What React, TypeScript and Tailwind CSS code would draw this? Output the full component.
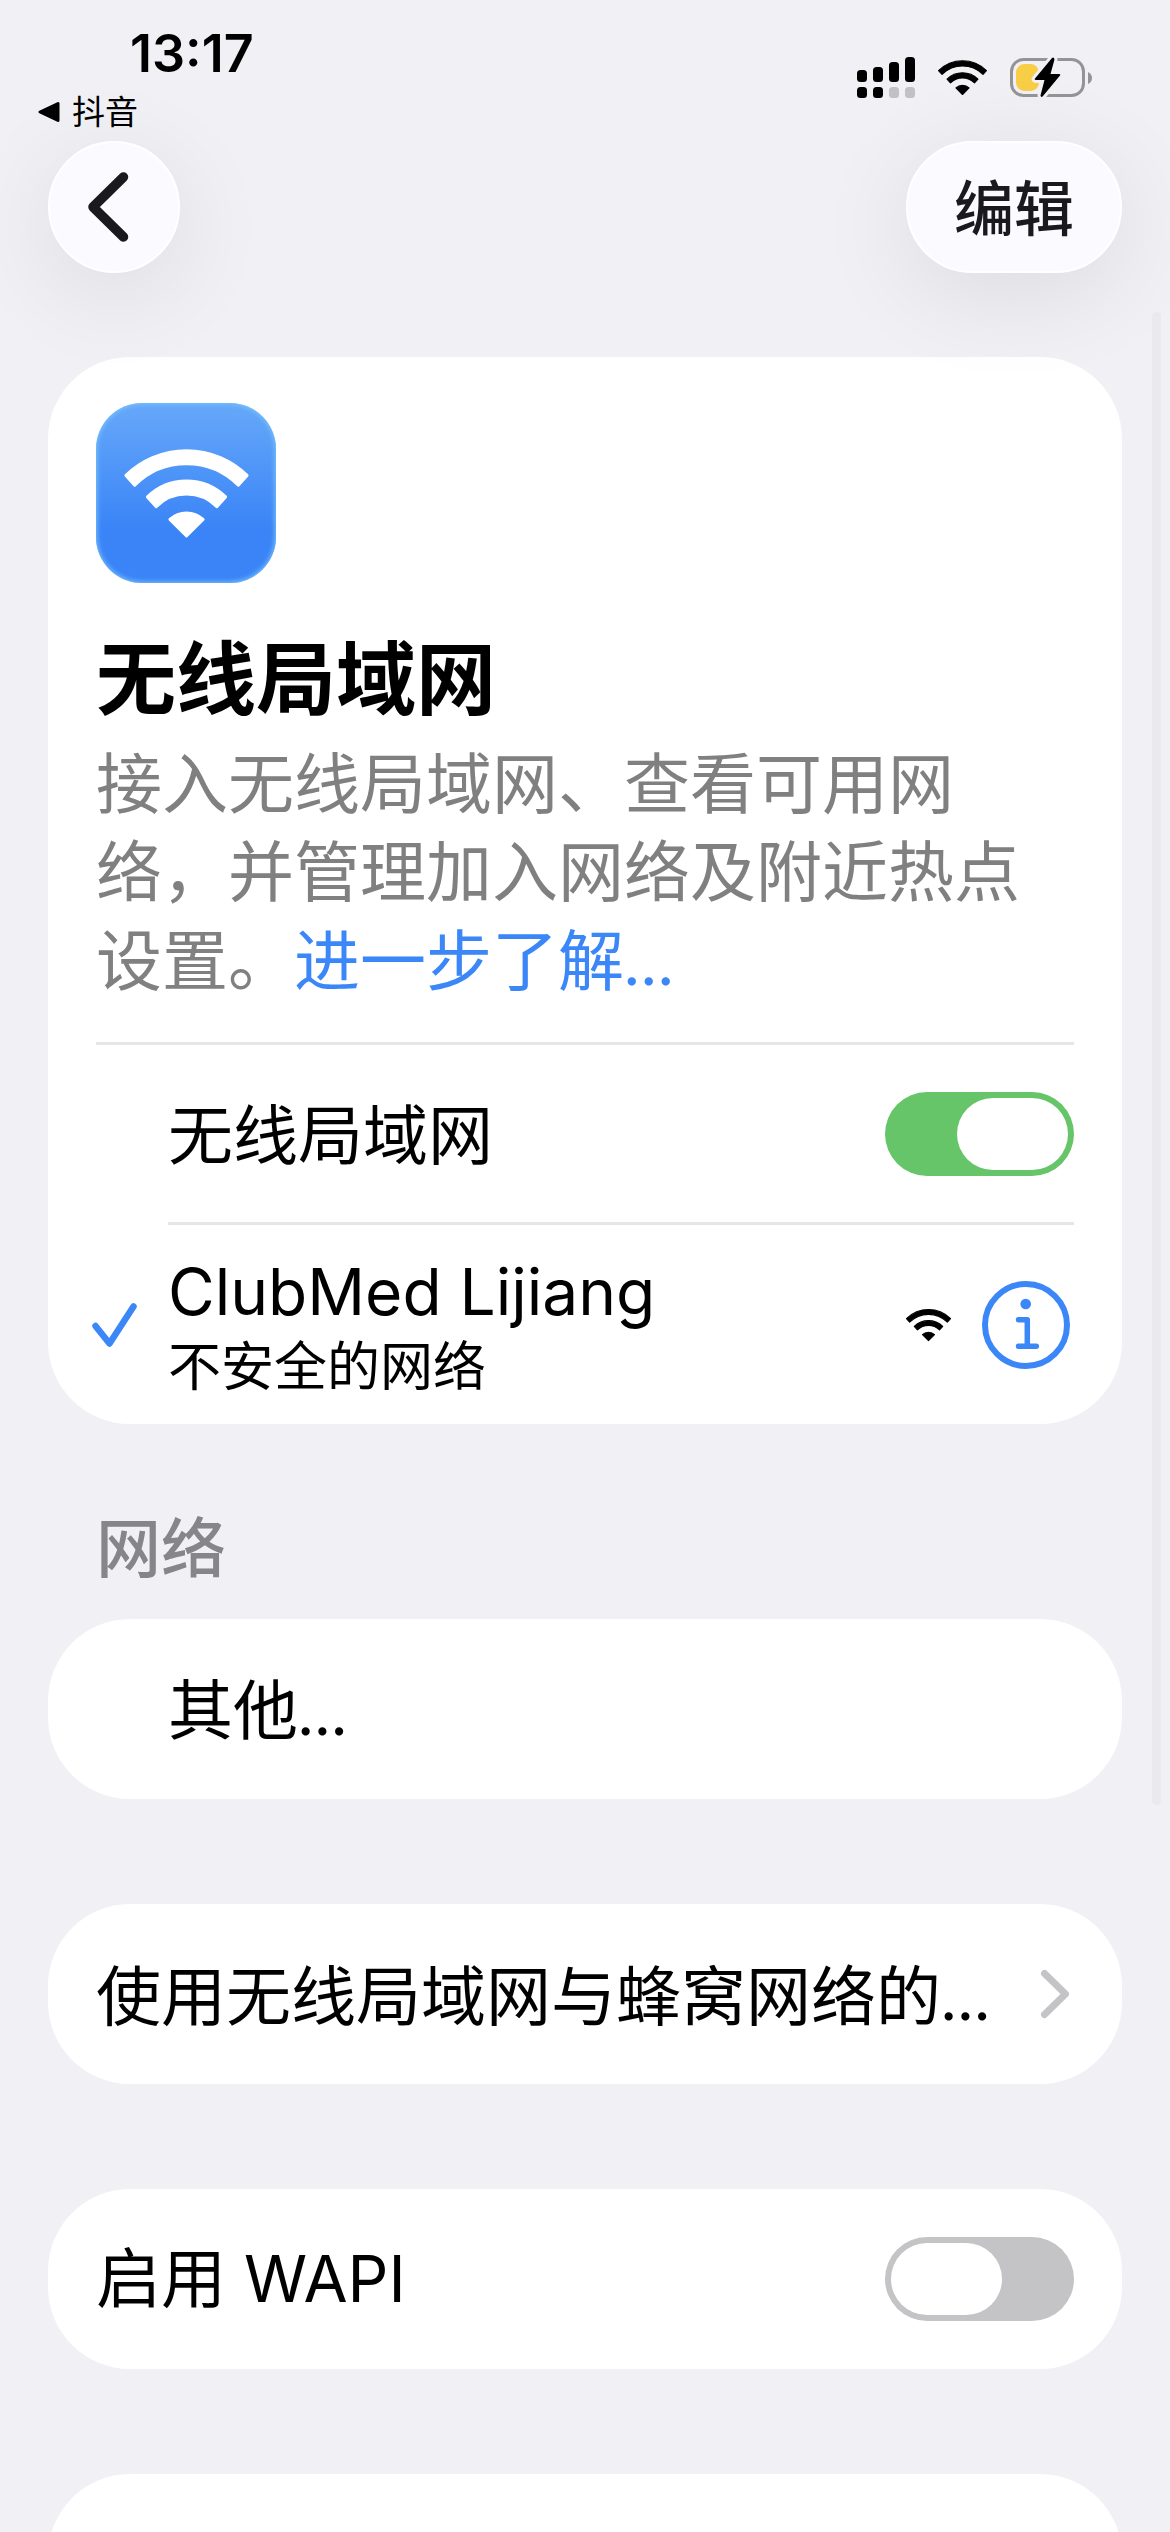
import { useId, useState } from "react";
import type { ReactNode } from "react";

function WifiGlyph({ className }: { className: string }) {
  return (
    <svg
      viewBox="-66 -92 132 94"
      className={className}
      fill="currentColor"
      stroke="currentColor"
      strokeWidth="3"
      strokeLinejoin="round"
      aria-hidden="true"
    >
      <path d="M-62 -63A88.4 88.4 0 0 1 62 -63L53 -53A75 75 0 0 0 -53 -53Z" />
      <path d="M-40 -41A57.3 57.3 0 0 1 40 -41L31 -31A43.8 43.8 0 0 0 -31 -31Z" />
      <path d="M-17 -18A25 25 0 0 1 17 -18L0 -1Z" />
    </svg>
  );
}

function SignalGlyph() {
  return (
    <svg viewBox="0 0 58 41" className="h-[41px] w-[58px]" aria-hidden="true">
      <rect x="0" y="13" width="10" height="12" rx="3.5" />
      <rect x="16" y="10" width="10" height="15" rx="3.5" />
      <rect x="32" y="5" width="10" height="20" rx="3.5" />
      <rect x="48" y="0" width="10" height="25" rx="3.5" />
      <rect x="0" y="30" width="10" height="11" rx="3.5" />
      <rect x="16" y="30" width="10" height="11" rx="3.5" />
      <rect x="32" y="30" width="10" height="11" rx="3.5" fill="#c1c1c4" />
      <rect x="48" y="30" width="10" height="11" rx="3.5" fill="#c1c1c4" />
    </svg>
  );
}

function BatteryGlyph() {
  const bolt =
    "M42 1L25 21.500Q24 23 26 23L34.500 23L30.500 38.500Q31 41 33 39L50 18.500Q51 17 49 17L40.500 17L44.500 2.500Q44 -0.500 42 1Z";
  return (
    <svg viewBox="0 0 83 41" className="h-[41px] w-[83px]" aria-hidden="true">
      <rect x="1.500" y="2.500" width="72" height="36" rx="12" fill="none" stroke="#949497" strokeWidth="3" />
      <path d="M78 15Q82 17 82 21Q82 25 78 27Z" fill="#949497" />
      <rect x="6" y="7" width="23" height="27" rx="8.500" fill="#f8ce46" />
      <path d={bolt} fill="#f1f0f5" stroke="#f1f0f5" strokeWidth="6" strokeLinejoin="round" />
      <path d={bolt} />
    </svg>
  );
}

function StatusBar() {
  return (
    <header className="flex h-[141px] shrink-0 items-start justify-between pr-[77px] pl-9">
      <div className="flex flex-col">
        <time className="mt-6 ml-[94px] text-[52px] leading-[60px] font-semibold">13:17</time>
        <button type="button" className="mt-1.5 flex items-center gap-3 text-[33px] leading-[44px]">
          <svg viewBox="0 0 24 24" className="size-6" aria-hidden="true">
            <path d="M4 12L22 3.500L22 20.500Z" stroke="black" strokeWidth="3" strokeLinejoin="round" />
          </svg>
          抖音
        </button>
      </div>
      <div className="mt-[57px] flex items-center gap-[22px]">
        <SignalGlyph />
        <WifiGlyph className="h-[37px] w-[51px]" />
        <BatteryGlyph />
      </div>
    </header>
  );
}

function Card({ children }: { children?: ReactNode }) {
  return <section className="shrink-0 rounded-[82px] bg-white px-12">{children}</section>;
}

function Ellipsis() {
  return <span className="font-[Lato,sans-serif]">…</span>;
}

function Switch({ id, on }: { id: string; on: boolean }) {
  const [checked, setChecked] = useState(on);
  return (
    <input
      id={id}
      type="checkbox"
      role="switch"
      checked={checked}
      onChange={(e) => setChecked(e.target.checked)}
      className="flex h-[84px] w-[189px] shrink-0 cursor-pointer appearance-none items-center rounded-full bg-[#c4c4c6] px-1.5 before:h-[72px] before:w-[111px] before:rounded-full before:bg-white checked:justify-end checked:bg-[#67c569]"
    />
  );
}

export default function App() {
  const wlanId = useId();
  const wapiId = useId();
  return (
    <div className="relative flex h-screen flex-col overflow-hidden bg-[#f1f0f5] font-[Inter,'Noto_Sans_CJK_SC',sans-serif] text-[65px] text-black">
      <StatusBar />
      <nav className="relative flex shrink-0 justify-between px-12">
        <button
          type="button"
          aria-label="返回"
          className="size-[132px] rounded-full border-2 border-white bg-[#fbfaff] shadow-[0_20px_100px_rgba(0,0,0,0.09)]"
        >
          <svg
            viewBox="2 2 128 128"
            className="size-full"
            fill="none"
            stroke="#1a191e"
            strokeWidth="9.500"
            strokeLinecap="round"
            strokeLinejoin="round"
            aria-hidden="true"
          >
            <path d="M75.500 36L45 66L75.500 96" />
          </svg>
        </button>
        <button
          type="button"
          className="h-[132px] rounded-full border-2 border-white bg-[#fbfaff] px-[46px] pt-1 text-[60px] font-medium text-[#1a191e] shadow-[0_20px_100px_rgba(0,0,0,0.09)]"
        >
          编辑
        </button>
      </nav>

      <main className="mt-[84px] flex flex-col px-12">
        <Card>
          <div className="pt-[46px] pb-[37px]">
            <div className="flex size-[180px] items-center justify-center rounded-[46px] bg-linear-to-b from-[#66a8f9] to-[#3a84f7] to-70% text-white shadow-[inset_0_0_5px_1px_#7cc4fa]">
              <WifiGlyph className="h-[92px] w-[129px]" />
            </div>
            <h1 className="mt-12 text-[80px] leading-[96px] font-bold">无线局域网</h1>
            <p className="mt-[13px] text-[66px] leading-[88px] text-[#808080]">
              接入无线局域网、查看可用网络，并管理加入网络及附近热点设置。
              <a href="#more" className="text-[#3b87f8]">
                进一步了解
                <Ellipsis />
              </a>
            </p>
          </div>
          <div className="flex h-[180px] items-center justify-between border-t-[3px] border-[#e6e6e6] pl-[72px]">
            <label htmlFor={wlanId} className="pt-1">
              无线局域网
            </label>
            <Switch id={wlanId} on />
          </div>
          <div className="ml-[72px] border-t-[3px] border-[#e6e6e6]" />
          <div className="-ml-1 flex h-[199px] items-center">
            <svg
              viewBox="0 0 45 44"
              className="mr-[31px] h-[44px] w-[45px] shrink-0"
              fill="none"
              stroke="#3b87f8"
              strokeWidth="6.500"
              strokeLinecap="round"
              strokeLinejoin="round"
              aria-hidden="true"
            >
              <path d="M3.500 23L17.500 40.500L41.500 3.500" />
            </svg>
            <div className="flex grow flex-col pt-1">
              <span className="text-[64px] leading-[80px]">ClubMed Lijiang</span>
              <span className="text-[53px] leading-[70px]">不安全的网络</span>
            </div>
            <WifiGlyph className="mr-[30px] h-[34px] w-[47px]" />
            <button type="button" aria-label="网络详情" className="mr-1 size-[88px]">
              <svg
                viewBox="0 0 88 88"
                fill="none"
                stroke="#3b87f8"
                strokeLinecap="round"
                strokeLinejoin="round"
                aria-hidden="true"
              >
                <circle cx="44" cy="44" r="41" strokeWidth="6" />
                <circle cx="43.700" cy="23" r="5.300" fill="#3b87f8" stroke="none" />
                <path d="M36.500 38.700H45.300V65.300M36.500 65.300H54.300" strokeWidth="5.500" />
              </svg>
            </button>
          </div>
        </Card>

        <h2 className="px-12 pt-[85px] pb-[30px] leading-[80px] font-medium text-[#86858a]">网络</h2>
        <div className="flex flex-col gap-[105px]">
          <Card>
            <button type="button" className="flex h-[180px] w-full items-center pt-1 pl-[72px]">
              其他
              <Ellipsis />
            </button>
          </Card>
          <Card>
            <a href="#apps" className="flex h-[180px] items-center justify-between whitespace-nowrap">
              <span className="pt-1">
                使用无线局域网与蜂窝网络的
                <Ellipsis />
              </span>
              <svg
                viewBox="0 0 30 50"
                className="mr-1 h-[50px] w-[30px]"
                fill="none"
                stroke="#c4c4c6"
                strokeWidth="7"
                strokeLinecap="round"
                strokeLinejoin="round"
                aria-hidden="true"
              >
                <path d="M4.500 4.500L25.500 25L4.500 45.500" />
              </svg>
            </a>
          </Card>
          <Card>
            <div className="flex h-[180px] items-center justify-between">
              <label htmlFor={wapiId}>
                启用<span className="text-[64px]"> WAPI</span>
              </label>
              <Switch id={wapiId} on={false} />
            </div>
          </Card>
          <Card>
            <div className="h-[180px]" />
          </Card>
        </div>
      </main>
      <div className="absolute top-[312px] right-[9px] h-[1493px] w-[9px] rounded-full bg-[#eae9ee]" />
    </div>
  );
}
